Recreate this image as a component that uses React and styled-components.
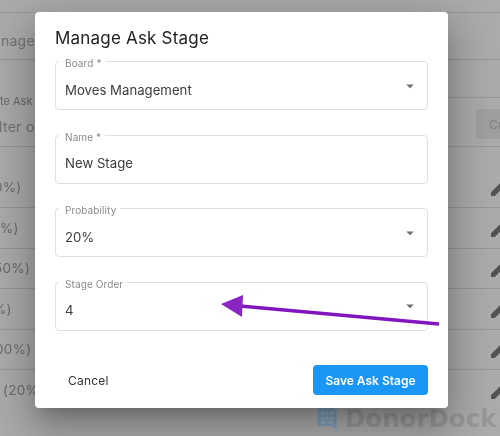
import styled, { createGlobalStyle } from 'styled-components';

const GlobalStyle = createGlobalStyle`
  html, body {
    margin: 0;
    padding: 0;
    background: #fff;
    font-family: Inter, "Liberation Sans", sans-serif;
  }
`;

const Page = styled.div`
  position: relative;
  width: 500px;
  height: 436px;
  overflow: hidden;
  background: #fff;
  filter: blur(0.35px);
`;

const TopBar = styled.div`
  height: 12px;
  border-bottom: 1px solid #e2e2e2;
`;

const Heading = styled.div`
  display: flex;
  align-items: center;
  height: 47px;
  padding-top: 8px;
  box-sizing: border-box;
  border-bottom: 1px solid #e2e2e2;
  font-size: 14px;
  letter-spacing: 0.2px;
  color: #aaa;

  span {
    margin-left: -7px;
  }
`;

const Toolbar = styled.div`
  display: flex;
  justify-content: space-between;
  height: 86px;
  border-bottom: 1px solid #e2e2e2;
`;

const FilterColumn = styled.div`
  display: flex;
  flex-direction: column;
  gap: 10px;
  padding-top: 34px;
`;

const FilterLabel = styled.span`
  font-size: 11px;
  line-height: 14px;
  color: #999;
`;

const FilterValue = styled.span`
  margin-left: -1px;
  font-size: 14px;
  letter-spacing: 0.3px;
  line-height: 18px;
  color: #aaa;
`;

const ActionColumn = styled.div`
  box-sizing: border-box;
  width: 52px;
  margin-top: 37px;
  padding: 11px 0 0 28px;
  border-top: 1px solid #e2e2e2;
`;

const CreateButton = styled.div`
  box-sizing: border-box;
  width: 60px;
  height: 30px;
  padding: 8px 0 0 13px;
  border-radius: 3px;
  background: #eee;
  color: #c2c2c2;
  font-size: 12px;
  white-space: nowrap;
`;

const StageRow = styled.div`
  box-sizing: border-box;
  display: flex;
  justify-content: space-between;
  align-items: center;
  height: ${({ $tall }) => ($tall ? '61px' : '40.5px')};
  padding-top: ${({ $tall }) => ($tall ? '20px' : '0')};
  border-bottom: ${({ $last }) => ($last ? 'none' : '1px solid #e2e2e2')};
  font-size: 13.5px;
  letter-spacing: 0.3px;
  color: #a0a0a0;
`;

const StageLabel = styled.span`
  margin-left: ${({ $offset }) => $offset}px;
`;

const EditIcon = styled.svg`
  width: 24px;
  height: 24px;
  margin-right: -12px;
  fill: #7d7d7d;
  flex: none;
`;

const Backdrop = styled.div`
  position: absolute;
  inset: 0;
  background: rgba(0, 0, 0, 0.33);
`;

const Watermark = styled.div`
  position: absolute;
  left: 317px;
  top: 407px;
  display: flex;
  align-items: center;
  gap: 8px;
`;

const WatermarkText = styled.span`
  font-family: "DejaVu Sans", sans-serif;
  font-size: 24.5px;
  font-weight: 700;
  line-height: 24px;
  color: #989898;
`;

const Modal = styled.div`
  position: absolute;
  left: 35px;
  top: 12px;
  box-sizing: border-box;
  width: 413px;
  height: 396px;
  padding: 16px 20px 13px;
  display: flex;
  flex-direction: column;
  border-radius: 4px;
  background: #fff;
  box-shadow: 0 11px 15px -7px rgba(0, 0, 0, 0.22), 0 24px 38px 3px rgba(0, 0, 0, 0.16),
    0 9px 46px 8px rgba(0, 0, 0, 0.14);
`;

const Title = styled.h2`
  margin: 0 0 13px;
  font-size: 17px;
  font-weight: 400;
  letter-spacing: 0.2px;
  line-height: 20px;
  color: #222;
`;

const Form = styled.div`
  display: flex;
  flex-direction: column;
  gap: 24.6px;
`;

const Field = styled.div`
  position: relative;
  box-sizing: border-box;
  display: flex;
  align-items: center;
  justify-content: space-between;
  height: 49px;
  padding: 0 8px 0 9px;
  border: 1px solid #e0e0e0;
  border-radius: 4px;
`;

const FieldLabel = styled.label`
  position: absolute;
  left: 3px;
  top: -4px;
  padding: 0 4px 0 6px;
  background: #fff;
  font-size: 10px;
  letter-spacing: 0.1px;
  line-height: 11px;
  color: #8a8a8a;
`;

const FieldValue = styled.span`
  padding-top: 8px;
  font-size: 13.2px;
  color: #3c3c3c;
`;

const Caret = styled.svg`
  width: 18px;
  height: 18px;
  fill: #6f6f6f;
`;

const Actions = styled.div`
  display: flex;
  justify-content: space-between;
  align-items: center;
  margin-top: auto;
`;

const CancelButton = styled.button`
  padding: 0 13px;
  border: 0;
  background: none;
  font-family: Inter, sans-serif;
  font-size: 12px;
  letter-spacing: 0.2px;
  color: #333;
`;

const SaveButton = styled.button`
  width: 115px;
  height: 30px;
  border: 0;
  border-radius: 4px;
  background: #1a96f6;
  font-family: Inter, sans-serif;
  font-size: 12px;
  font-weight: 600;
  color: #fff;
`;

const ArrowLayer = styled.svg`
  position: absolute;
  left: 0;
  top: 0;
  width: 500px;
  height: 436px;
  pointer-events: none;
`;

const stages = [
  { label: '0%)', offset: -6, tall: true },
  { label: '%)', offset: 0 },
  { label: '50%)', offset: -6 },
  { label: '%)', offset: -7 },
  { label: '00%)', offset: -5 },
  { label: '(20%', offset: 3, last: true },
];

const fields = [
  { label: 'Board *', value: 'Moves Management', select: true },
  { label: 'Name *', value: 'New Stage' },
  { label: 'Probability', value: '20%', select: true },
  { label: 'Stage Order', value: '4', select: true },
];

const App = () => {
  return (
    <Page>
      <GlobalStyle />
      <TopBar />
      <Heading>
        <span>anage</span>
      </Heading>
      <Toolbar>
        <FilterColumn>
          <FilterLabel>te Ask</FilterLabel>
          <FilterValue>lter or</FilterValue>
        </FilterColumn>
        <ActionColumn>
          <CreateButton>Create</CreateButton>
        </ActionColumn>
      </Toolbar>
      {stages.map((stage, i) => (
        <StageRow key={i} $tall={stage.tall} $last={stage.last}>
          <StageLabel $offset={stage.offset}>{stage.label}</StageLabel>
          <EditIcon viewBox="0 0 24 24">
            <path d="M3 17.25V21h3.75L17.81 9.94l-3.75-3.75L3 17.25zM20.71 7.04c.39-.39.39-1.02 0-1.41l-2.34-2.34c-.39-.39-1.02-.39-1.41 0l-1.83 1.83 3.75 3.75 1.83-1.83z" />
          </EditIcon>
        </StageRow>
      ))}
      <Backdrop />
      <Watermark>
        <svg width="20" height="24" viewBox="0 0 20 24">
          <path
            d="M3 1h14a2.5 2.5 0 0 1 2.5 2.5V23l-5-4H3a2.5 2.5 0 0 1-2.5-2.5v-13A2.5 2.5 0 0 1 3 1z"
            fill="#7fa0bc"
          />
          <path
            d="M4 5h3v2.500H4zM8.500 5h3v2.500h-3zM13 5h3v2.500h-3zM4 10h3v2.500H4zM8.500 10h3v2.500h-3zM13 10h3v2.500h-3zM4 14.500h5v2H4zM11 14.500h5v2h-5z"
            fill="#a3aeb8"
          />
        </svg>
        <WatermarkText>DonorDock</WatermarkText>
      </Watermark>
      <Modal>
        <Title>Manage Ask Stage</Title>
        <Form>
          {fields.map((field) => (
            <Field key={field.label}>
              <FieldLabel>{field.label}</FieldLabel>
              <FieldValue>{field.value}</FieldValue>
              {field.select && (
                <Caret viewBox="0 0 24 24">
                  <path d="M7 10l5 5 5-5z" />
                </Caret>
              )}
            </Field>
          ))}
        </Form>
        <Actions>
          <CancelButton>Cancel</CancelButton>
          <SaveButton>Save Ask Stage</SaveButton>
        </Actions>
      </Modal>
      <ArrowLayer viewBox="0 0 500 436">
        <path d="M439 324L240 306" stroke="#8216be" strokeWidth="3.4" fill="none" />
        <path d="M221 304L243 295L242 317Z" fill="#8a25c2" />
      </ArrowLayer>
    </Page>
  );
};

export default App;
